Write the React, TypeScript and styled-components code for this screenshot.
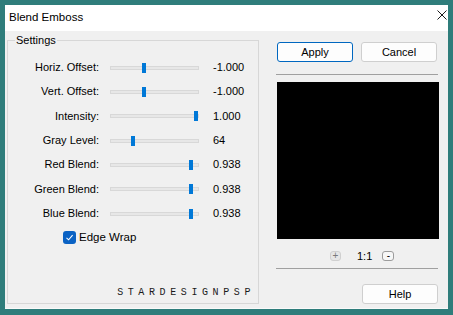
import React from 'react';
import styled, { createGlobalStyle } from 'styled-components';

const Global = createGlobalStyle`
  html, body { margin: 0; padding: 0; }
  body {
    background: #2f7d7b;
    font-family: "Liberation Sans", Arial, sans-serif;
    font-size: 11px;
    color: #000;
  }
`;

const Page = styled.div`
  width: 453px;
  height: 315px;
  box-sizing: border-box;
  padding: 5px 5px 6px 5px;
  display: flex;
`;

const Window = styled.div`
  flex: 1;
  display: flex;
  flex-direction: column;
  background: #f0f0f0;
  border-bottom: 1px solid #fafafa;
`;

const TitleBar = styled.div`
  height: 26px;
  flex: none;
  background: #fff;
  display: flex;
  align-items: flex-start;
  justify-content: space-between;
  padding-left: 4px;
`;

const Title = styled.div`
  font-size: 11.5px;
  line-height: 14px;
  margin-top: 5px;
  color: #000;
`;

const CloseIcon = styled.svg`
  width: 10px;
  height: 10px;
  margin-top: 5px;
  margin-right: 1px;
`;

const Body = styled.div`
  flex: 1;
  display: flex;
  padding: 9px 0 0 2px;
  min-height: 0;
`;

const Group = styled.div`
  width: 252px;
  height: 264px;
  box-sizing: border-box;
  border: 1px solid #d7d7d7;
  display: flex;
  flex-direction: column;
`;

const Caption = styled.div`
  align-self: flex-start;
  margin: -7px 0 0 7px;
  padding: 0 1px;
  line-height: 13px;
  background: #f0f0f0;
`;

const Rows = styled.div`
  padding-top: 8.5px;
  display: flex;
  flex-direction: column;
`;

const Row = styled.div`
  height: 24.33px;
  display: flex;
  align-items: center;
`;

const Label = styled.div`
  width: 91px;
  text-align: right;
  line-height: 13px;
`;

const Track = styled.div`
  position: relative;
  margin-left: 11px;
  width: 89px;
  height: 4px;
  box-sizing: border-box;
  background: #e7e7e7;
  border: 1px solid #d8d8d8;
`;

const Thumb = styled.div`
  position: absolute;
  top: -4px;
  width: 4px;
  height: 10px;
  background: #0078d7;
`;

const Value = styled.div`
  margin-left: 14px;
  line-height: 13px;
`;

const CheckRow = styled(Row)`
  padding-left: 55px;
`;

const CheckBox = styled.div`
  width: 13px;
  height: 13px;
  border-radius: 3px;
  background: #0a62c4;
  display: flex;
  align-items: center;
  justify-content: center;
`;

const CheckText = styled.div`
  margin-left: 3px;
  font-size: 11.5px;
  line-height: 13px;
`;

const Watermark = styled.div`
  margin-top: auto;
  align-self: flex-end;
  margin-right: 3px;
  margin-bottom: 6px;
  font-family: "Liberation Mono", "DejaVu Sans Mono", monospace;
  font-size: 10px;
  line-height: 8px;
  letter-spacing: 4.6px;
  color: #1a1a1a;
`;

const Side = styled.div`
  margin-left: 17px;
  width: 163px;
  padding-top: 2px;
  display: flex;
  flex-direction: column;
`;

const ButtonRow = styled.div`
  display: flex;
  justify-content: space-between;
  padding: 0 2px 0 1px;
`;

const Button = styled.button<{ $default?: boolean }>`
  width: 76px;
  height: 20px;
  box-sizing: border-box;
  padding: 0;
  border-radius: 3px;
  border: 1px solid ${p => (p.$default ? '#0067c0' : '#cfcfcf')};
  background: #fdfdfd;
  font-family: "Liberation Sans", Arial, sans-serif;
  font-size: 11px;
  color: #000;
`;

const Separator = styled.div<{ $top: number }>`
  margin-top: ${p => p.$top}px;
  height: 1px;
  width: 162px;
  background: #a0a0a0;
`;

const Preview = styled.div`
  margin-top: 7px;
  margin-left: 1px;
  width: 162px;
  height: 157px;
  background: #000;
`;

const ZoomRow = styled.div`
  margin-top: 12px;
  height: 10px;
  display: flex;
  align-items: center;
  padding-left: 54px;
`;

const ZoomButton = styled.div<{ $active?: boolean }>`
  width: ${p => (p.$active ? 12 : 11)}px;
  height: 10px;
  box-sizing: border-box;
  border-radius: 3px;
  border: 1px solid ${p => (p.$active ? '#9c9c9c' : '#d0d0d0')};
  background: ${p => (p.$active ? '#f7f7f7' : '#e6e6e6')};
  color: ${p => (p.$active ? '#000' : '#7a7a7a')};
  font-size: 10px;
  line-height: 8px;
  text-align: center;
`;

const ZoomText = styled.div`
  margin: 0 10px 0 16px;
  line-height: 12px;
  font-size: 11px;
`;

const HelpButton = styled(Button)`
  align-self: flex-end;
  margin-top: 15px;
  margin-right: 1px;
`;

const sliders = [
  { label: 'Horiz. Offset:', value: '-1.000', pos: 32 },
  { label: 'Vert. Offset:', value: '-1.000', pos: 32 },
  { label: 'Intensity:', value: '1.000', pos: 84 },
  { label: 'Gray Level:', value: '64', pos: 21 },
  { label: 'Red Blend:', value: '0.938', pos: 79 },
  { label: 'Green Blend:', value: '0.938', pos: 79 },
  { label: 'Blue Blend:', value: '0.938', pos: 79 },
];

export default function App() {
  return (
    <>
      <Global />
      <Page>
        <Window>
          <TitleBar>
            <Title>Blend Emboss</Title>
            <CloseIcon viewBox="0 0 10 10">
              <path d="M0.5 0.5 L9.5 9.5 M9.5 0.5 L0.5 9.5" stroke="#1a1a1a" strokeWidth="1" fill="none" />
            </CloseIcon>
          </TitleBar>
          <Body>
            <Group>
              <Caption>Settings</Caption>
              <Rows>
                {sliders.map(s => (
                  <Row key={s.label}>
                    <Label>{s.label}</Label>
                    <Track>
                      <Thumb style={{ left: s.pos - 1 }} />
                    </Track>
                    <Value>{s.value}</Value>
                  </Row>
                ))}
                <CheckRow>
                  <CheckBox>
                    <svg width="9" height="9" viewBox="0 0 9 9">
                      <path d="M1.5 4.8 L3.6 6.8 L7.6 2.2" stroke="#fff" strokeWidth="1.1" fill="none" />
                    </svg>
                  </CheckBox>
                  <CheckText>Edge Wrap</CheckText>
                </CheckRow>
              </Rows>
              <Watermark>STARDESIGNPSP</Watermark>
            </Group>
            <Side>
              <ButtonRow>
                <Button $default>Apply</Button>
                <Button>Cancel</Button>
              </ButtonRow>
              <Separator $top={12} />
              <Preview />
              <ZoomRow>
                <ZoomButton>+</ZoomButton>
                <ZoomText>1:1</ZoomText>
                <ZoomButton $active>-</ZoomButton>
              </ZoomRow>
              <Separator $top={7} />
              <HelpButton>Help</HelpButton>
            </Side>
          </Body>
        </Window>
      </Page>
    </>
  );
}
